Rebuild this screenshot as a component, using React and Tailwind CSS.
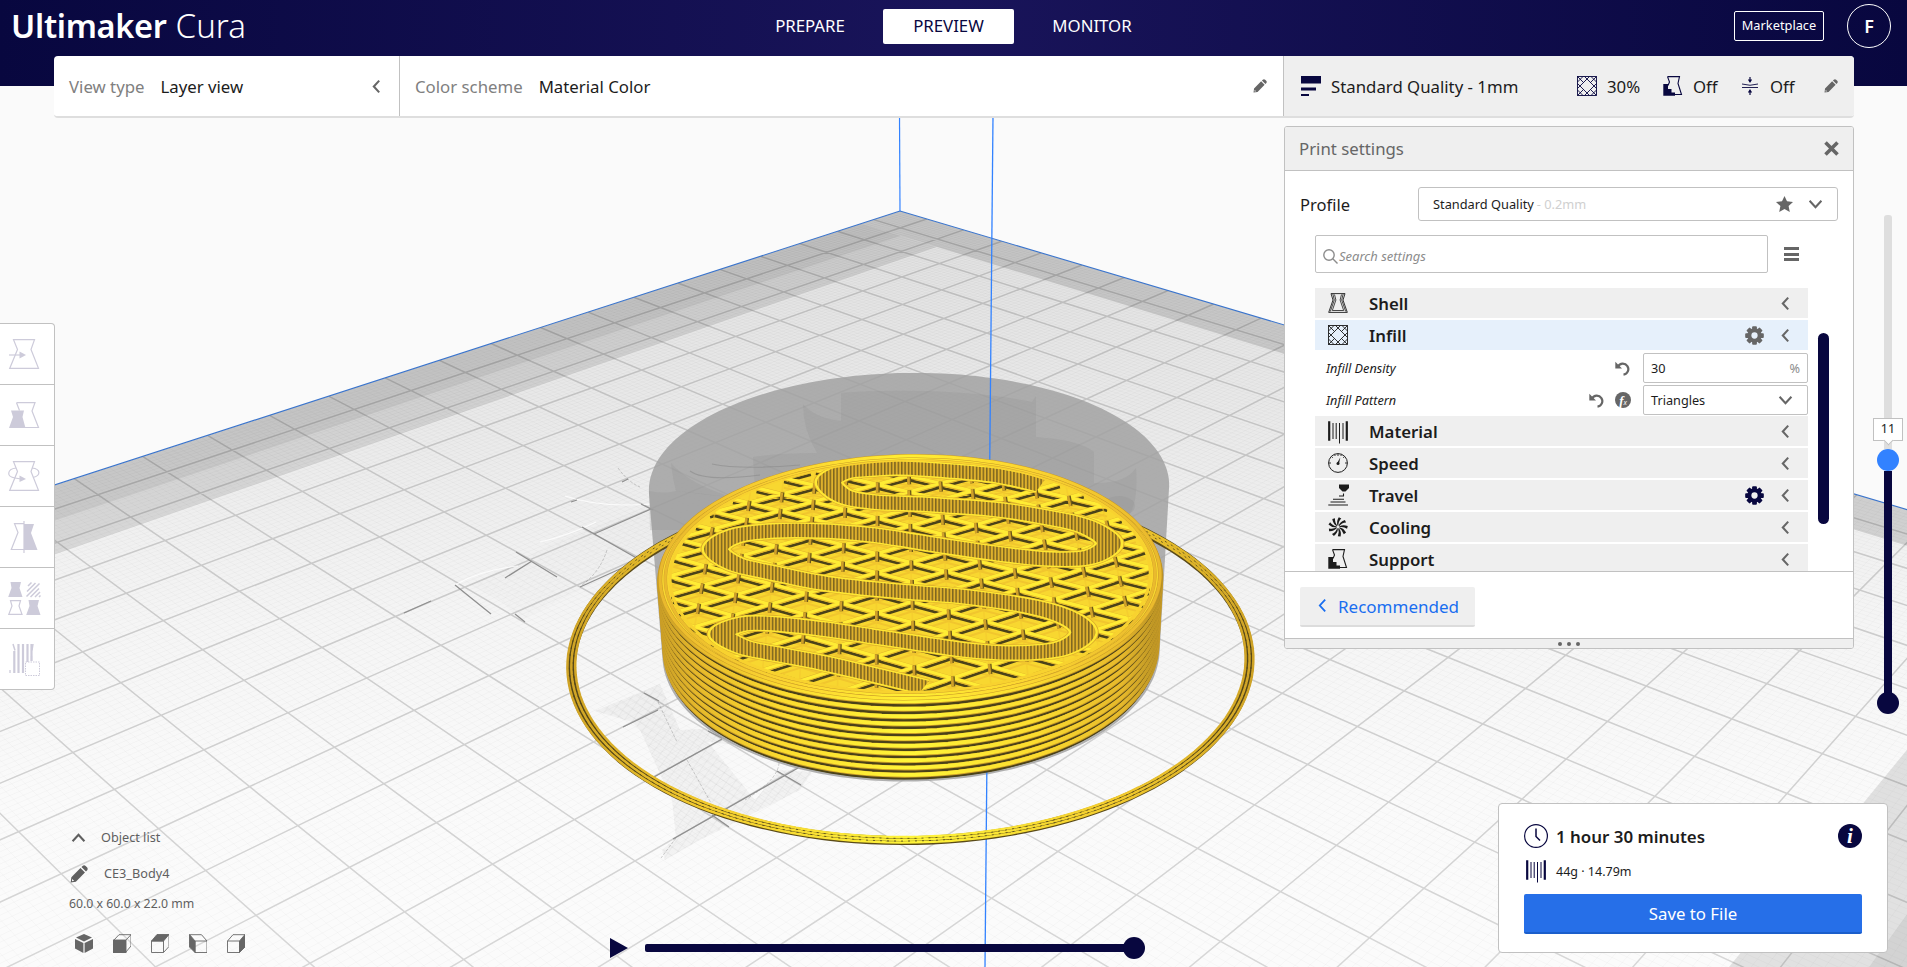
import React from "react";

/* ---------- camera ---------- */
const CX = 900, CY = 211;
const VA = [-1255, -428], VB = [2872, -428], VZ = [953.5, 4223];
const KA = -0.0164, KB = -0.01762, KZ = -0.01188;
function proj(w, u, h = 0) {
  const s = KA * w, t = KB * u, r = KZ * h;
  const d = 1 + s + t + r;
  return [(CX + s * VA[0] + t * VB[0] + r * VZ[0]) / d, (CY + s * VA[1] + t * VB[1] + r * VZ[1]) / d];
}
const f = (p) => p[0].toFixed(1) + " " + p[1].toFixed(1);
const line = (a, b) => "M" + f(a) + "L" + f(b);
const poly = (pts) => "M" + pts.map(f).join("L") + "Z";
const S = 23.5, M = 11.75;
const ring = (r, h, n = 160) =>
  Array.from({ length: n }, (_, i) => {
    const a = (i / n) * Math.PI * 2;
    return proj(M + r * Math.cos(a), M + r * Math.sin(a), h);
  });
const circle = (r, h) => poly(ring(r, h));
function hull(points) {
  const p = [...points].sort((a, b) => a[0] - b[0] || a[1] - b[1]);
  const cr = (o, a, b) => (a[0] - o[0]) * (b[1] - o[1]) - (a[1] - o[1]) * (b[0] - o[0]);
  const half = (list) => {
    const out = [];
    for (const q of list) {
      while (out.length > 1 && cr(out[out.length - 2], out[out.length - 1], q) <= 0) out.pop();
      out.push(q);
    }
    out.pop();
    return out;
  };
  return poly([...half(p), ...half(p.reverse())]);
}
const rect = (w0, w1, u0, u1) => poly([proj(w0, u0), proj(w1, u0), proj(w1, u1), proj(w0, u1)]);

let major = "", minor = "";
for (let k = 0; k < 23; k++) {
  const g = 0.75 + k;
  major += line(proj(g, 0), proj(g, S)) + line(proj(0, g), proj(S, g));
}
for (let k = 1; k < 235; k++) {
  const g = k / 10 + 0.05;
  minor += line(proj(g, 0), proj(g, S)) + line(proj(0, g), proj(S, g));
}

/* infill: three families of lines, 60 degrees apart, on the top layer */
const H = 1.02, R = 2.84, RO = 2.955;
function family(deg, spacing) {
  const a = (deg * Math.PI) / 180;
  const dx = Math.cos(a), dy = Math.sin(a);
  let out = "";
  for (let k = -9; k <= 9; k++) {
    const o = k * spacing;
    if (Math.abs(o) >= R) continue;
    const l = Math.sqrt(R * R - o * o);
    const x = M - dy * o, y = M + dx * o;
    out += line(proj(x - dx * l, y - dy * l, H), proj(x + dx * l, y + dy * l, H));
  }
  return out;
}
const FV = family(45, 0.405), FA = family(105, 0.405), FB = family(-15, 0.405);

/* a short upright wall where the three families meet */
const posts = (() => {
  let out = "";
  const d = 0.405, side = d / Math.cos(Math.PI / 6), q = Math.SQRT1_2;
  for (let c = -8; c <= 8; c++) {
    for (let k = -8; k <= 8; k++) {
      const across = c * d, along = (k + (c % 2 ? 0.5 : 0)) * side;
      if (Math.hypot(across, along) > R - 0.1) continue;
      const [x, y] = proj(M + q * (along + across), M + q * (along - across), H);
      const lean = (x - 882.5) / (y + 428);
      out += line([x - 2 * lean, y - 2], [x + 8 * lean, y + 8]);
    }
  }
  return out;
})();

/* serpentine wall, screen points */
const K = 0.55;
const snake = [
  [1041, 485], [1000, 476], [950, 471], [900, 468], [873, 469], [845, 472], [829, 482], [843, 496], [873, 502], [920, 504],
  [950, 506], [1000, 510], [1050, 518], [1087, 527], [1109, 543], [1090, 557], [1050, 559], [1000, 554], [950, 547],
  [900, 539], [873, 535], [823, 531], [773, 531], [735, 536], [716, 549], [735, 564], [773, 573], [823, 583], [873, 589],
  [920, 593], [967, 597], [1033, 607], [1070, 619], [1083, 634], [1060, 649], [1012, 653], [965, 650], [917, 643],
  [870, 636], [823, 629], [776, 624], [743, 624], [722, 634], [743, 647], [776, 654], [823, 663], [870, 674], [924, 687],
].map(([x, y]) => [x, y / K]);
const snakePath = (() => {
  let d = "M" + f(snake[0]);
  for (let i = 0; i < snake.length - 1; i++) {
    const p0 = snake[i - 1] || snake[i], p1 = snake[i], p2 = snake[i + 1], p3 = snake[i + 2] || p2;
    d += "C" + f([p1[0] + (p2[0] - p0[0]) / 6, p1[1] + (p2[1] - p0[1]) / 6]) + " " +
      f([p2[0] - (p3[0] - p1[0]) / 6, p2[1] - (p3[1] - p1[1]) / 6]) + " " + f(p2);
  }
  return d;
})();

function Scene() {
  const layers = Array.from({ length: 11 }, (_, i) => ((i + 1) * H) / 11);
  const dark = [
    [[404, 613], [431, 601]], [[455, 585], [491, 614]], [[505, 578], [532, 561]], [[516, 552], [557, 577]],
    [[580, 587], [651, 555]], [[582, 527], [640, 560]], [[594, 534], [651, 509]], [[641, 504], [653, 510]],
    [[622, 482], [628, 479]], [[571, 502], [577, 500]], [[515, 614], [525, 622]],
    [[644, 693], [659, 701]], [[623, 727], [658, 710]], [[654, 777], [722, 739]], [[673, 839], [798, 768]],
    [[777, 771], [801, 785]], [[712, 815], [729, 827]], [[708, 731], [722, 738]],
  ];
  return (
    <svg className="absolute inset-0" width="1907" height="967" viewBox="0 0 1907 967">
      <defs>
        <linearGradient id="plate" x1="0" y1="211" x2="0" y2="900" gradientUnits="userSpaceOnUse">
          <stop offset="0" stopColor="#e0e0e0" />
          <stop offset="0.3" stopColor="#e9e9e9" />
          <stop offset="0.6" stopColor="#f5f5f5" />
          <stop offset="0.85" stopColor="#fafafa" />
          <stop offset="1" stopColor="#fbfbfb" />
        </linearGradient>
        <linearGradient id="major" x1="0" y1="211" x2="0" y2="960" gradientUnits="userSpaceOnUse">
          <stop offset="0" stopColor="#bababa" />
          <stop offset="0.4" stopColor="#c8c8c8" />
          <stop offset="1" stopColor="#d7d7d7" />
        </linearGradient>
        <linearGradient id="side" x1="657" y1="0" x2="1162" y2="0" gradientUnits="userSpaceOnUse">
          <stop offset="0" stopColor="#c79d26" />
          <stop offset="0.08" stopColor="#e6b92b" />
          <stop offset="0.25" stopColor="#fbdc2f" />
          <stop offset="0.5" stopColor="#fff538" />
          <stop offset="0.75" stopColor="#fbdc2f" />
          <stop offset="0.92" stopColor="#e6b92b" />
          <stop offset="1" stopColor="#b58e23" />
        </linearGradient>
        <linearGradient id="rim" x1="657" y1="0" x2="1162" y2="0" gradientUnits="userSpaceOnUse">
          <stop offset="0" stopColor="#e9b82d" />
          <stop offset="0.3" stopColor="#fdd931" />
          <stop offset="0.5" stopColor="#ffee33" />
          <stop offset="0.7" stopColor="#fdd931" />
          <stop offset="1" stopColor="#e9b82d" />
        </linearGradient>
        <linearGradient id="skirt" x1="568" y1="0" x2="1254" y2="0" gradientUnits="userSpaceOnUse">
          <stop offset="0" stopColor="#cfa326" />
          <stop offset="0.2" stopColor="#f3cb2e" />
          <stop offset="0.5" stopColor="#fff53a" />
          <stop offset="0.8" stopColor="#f3cb2e" />
          <stop offset="1" stopColor="#cfa326" />
        </linearGradient>
        <pattern id="hatch" width="3.4" height="10" patternUnits="userSpaceOnUse">
          <rect width="3.4" height="10" fill="#dfb12c" />
          <rect width="1.5" height="10" fill="#7d6520" />
        </pattern>
        <pattern id="mesh" width="7" height="7" patternUnits="userSpaceOnUse" patternTransform="rotate(35)">
          <rect width="7" height="7" fill="#000" fillOpacity="0.03" />
          <path d="M0 0H7M0 0V7" stroke="#000" strokeOpacity="0.06" fill="none" />
        </pattern>
        <clipPath id="plateClip"><path d={rect(0, S, 0, S)} /></clipPath>
        <clipPath id="topClip"><path d={circle(R + 0.02, H)} /></clipPath>
      </defs>
      <rect width="1907" height="967" fill="#fafafa" />
      <g clipPath="url(#plateClip)">
        <path d={rect(0, S, 0, S)} fill="url(#plate)" />
        <path d={minor} stroke="#000" strokeOpacity="0.022" strokeWidth="1" fill="none" />
        <path d={major} stroke="url(#major)" strokeWidth="1.5" fill="none" />
        <path d={rect(0, 2.06, 1.1, 22.4)} fill="#000" fillOpacity="0.1" />
        <path d={rect(0, 1.1, 0, S)} fill="#000" fillOpacity="0.06" />
        <path d={rect(1.1, S, 0, 1.1)} fill="#000" fillOpacity="0.13" />
        <path d={rect(0, 1.1, 0, 1.1)} fill="#000" fillOpacity="0.07" />
        <path d={rect(21.4, S, 1.1, S)} fill="#000" fillOpacity="0.1" />
        <path d={rect(22.35, S, 0, S)} fill="#000" fillOpacity="0.06" />
      </g>
      <path d={line(proj(0, 0), proj(0, S)) + line(proj(0, 0), proj(S, 0))} stroke="#3a74cc" strokeWidth="1.1" fill="none" />
      <path d="M899.5 116L900 211" stroke="#3282ff" strokeWidth="1.2" />

      <path d="M595 711L660 684L680 730L718 728L735 745L708 742L755 800L780 770L812 772L800 790L700 840L665 860L662 850L676 838L672 800L640 730L632 722Z" fill="url(#mesh)" />
      <path d="M470 585L560 540L650 505L655 545L600 580L520 620L500 600Z" fill="url(#mesh)" opacity="0.3" />
      <path d="M565 496Q600 508 651 504M540 542Q570 535 596 522M455 585Q480 570 518 566" stroke="#fff" strokeWidth="1.2" fill="none" opacity="0.8" />
      <path d="M618 468Q628 482 640 487M607 550Q600 572 582 585M779 763Q778 780 745 800M658 702L677 742M687 760L711 803M676 838L661 858" stroke="#000" strokeOpacity="0.18" strokeWidth="1" fill="none" strokeDasharray="3 1.5" />
      <path d={dark.map(([a, b]) => line(a, b)).join("")} stroke="#8f8f8f" strokeWidth="1.3" fill="none" />

      {/* part above the current layer */}
      <path d={hull([...ring(2.99, 0), ...ring(2.99, 2.2)])} fill="#a1a1a1" fillOpacity="0.84" />
      <g fill="#8f8f8f" fillOpacity="0.22">
        <path d="M649 491Q665 494 676 491Q700 493 735 498L755 490L753 457Q780 453 817 453Q803 430 803 404Q815 418 841 421V393Q870 390 925 391Q990 393 1032 402L1036 396V437Q1080 440 1094 452V483Q1125 484 1136 468Q1138 495 1132 510L1120 530H650Z" />
        <path d="M671 463Q673 480 676 491L735 498Q690 485 671 463Z" />
        <ellipse cx="1119" cy="506" rx="16" ry="10" />
      </g>
      <path d="M690 471Q705 482 760 475M712 464Q740 470 800 465" stroke="#8a8a8a" strokeWidth="1.2" fill="none" opacity="0.6" />
      <path d="M993 116L985 967" stroke="#3282ff" strokeWidth="1.3" />

      {/* skirt */}
      <path d={circle(4.05, 0.03)} stroke="#5a4a18" strokeWidth="9" fill="none" />
      {[4.005, 4.05, 4.095].map((r) => (
        <path key={r} d={circle(r, 0.04)} stroke="url(#skirt)" strokeWidth="2.5" fill="none" />
      ))}
      <g fill="none" stroke="#4d421a" strokeWidth="0.8">
        <path d={circle(4.072, 0.04)} strokeDasharray="2 5" />
        <path d={circle(4.028, 0.04)} strokeDasharray="2 5" strokeDashoffset="3" />
      </g>

      {/* printed layers */}
      <path d={hull([...ring(RO, 0), ...ring(RO, H)])} fill="#4b4219" />
      {layers.map((h) => (
        <g key={h}>
          <path d={circle(RO, h - 0.07)} fill="none" stroke="#4b4219" strokeWidth="2.6" />
          <path d={circle(RO, h - 0.035)} fill="none" stroke="#c99c27" strokeWidth="5" />
          <path d={circle(RO, h - 0.03)} fill="none" stroke="url(#side)" strokeWidth="3.9" />
        </g>
      ))}
      <path d={circle(RO, H)} fill="#f8d730" />
      <g clipPath="url(#topClip)" fill="none">
        <path d={FA + FB} stroke="#f1c62e" strokeWidth="2" transform="translate(0 9.5)" />
        <path d={FA + FB} stroke="#4b4219" strokeWidth="2.6" transform="translate(0 3.9)" />
        <path d={FA + FB} stroke="#e0b22c" strokeWidth="4.4" />
        <path d={FA + FB} stroke="#ffec34" strokeWidth="3.2" transform="translate(0 -0.3)" />
        <path d={FV} stroke="#f3c92e" strokeWidth="1.6" opacity="0.6" />
        <path d={posts} stroke="#6b5719" strokeWidth="3.6" transform="translate(0.8 0)" />
        <path d={posts} stroke="#cfa02a" strokeWidth="2.6" />
      </g>
      <g fill="none" transform={`scale(1 ${K})`} strokeLinejoin="round">
        <path d={snakePath} stroke="#dbac2b" strokeWidth="31" />
        <path d={snakePath} stroke="#ffe833" strokeWidth="29" />
        <path d={snakePath} stroke="url(#hatch)" strokeWidth="24" />
      </g>
      <g fill="none">
        <path d={circle(2.83, H)} stroke="#f8d22f" strokeWidth="3" />
        <path d={circle(2.885, H)} stroke="#d3a329" strokeWidth="3.4" />
        <path d={circle(2.885, H)} stroke="url(#rim)" strokeWidth="2.6" />
        <path d={circle(2.945, H)} stroke="#c99a27" strokeWidth="4" />
        <path d={circle(2.945, H)} stroke="url(#rim)" strokeWidth="3" />
      </g>
    </svg>
  );
}

/* ---------- icons ---------- */
const Pencil = ({ size = 15, className = "" }) => (
  <svg width={size} height={size} viewBox="0 0 16 16" className={className} fill="currentColor">
    <path d="M11.200.9a2 2 0 0 1 2.700 0l1.200 1.200a2 2 0 0 1 0 2.700L14.200 5.800 10.200 1.800z" />
    <path fillRule="evenodd" d="M9.300 2.700l4 4L5.200 14.800.6 15.500 1.200 10.800zM2 12.500l1.600 1.600-1.400.3-.5-.5z" />
  </svg>
);
const Chevron = ({ dir = "left", w = 9, h = 15, sw = 2.3 }) => {
  const d = { left: "M8 1L2 7.500L8 14", down: "M1.500 2L8 9L14.500 2", up: "M1.500 9L8 2L14.500 9" }[dir];
  return (
    <svg width={w} height={h} viewBox={dir === "left" ? "0 0 10 15" : "0 0 16 11"} fill="none" stroke="currentColor" strokeWidth={sw}>
      <path d={d} />
    </svg>
  );
};
const InfillIcon = () => (
  <svg width="20" height="20" viewBox="0 0 20 20" fill="none" stroke="currentColor" strokeWidth="0.900">
    <rect x="0.500" y="0.500" width="19" height="19" />
    <path d="M.5 12.500L12.500 .5M7.500 19.500L19.500 7.500M7.500 .5L19.500 12.500M.5 7.500L12.500 19.500M.5 6L6 .5M14 19.500L19.500 14M14 .5L19.500 6M.5 14L6 19.500M1 1L6.500 6.500M19 1L13.500 6.500M1 19L6.500 13.500M19 19L13.500 13.500" />
  </svg>
);
const SupportIcon = () => (
  <svg width="20" height="20" viewBox="0 0 20 20" fill="none" stroke="currentColor">
    <path d="M4.500 .6H16.500L15 7.500L18.500 18.500H11M4.500 .6L6.500 6L5 9.500" strokeWidth="1.100" />
    <path d="M.3 8H5V13H8.500V16.500H12V19.800H.3Z" fill="currentColor" stroke="none" />
  </svg>
);
const AdhesionIcon = () => (
  <svg width="18" height="20" viewBox="0 0 18 20" fill="none" stroke="currentColor">
    <path d="M1 8Q9 10.500 17 8M1 11.500H17" strokeWidth="0.900" />
    <path d="M9 1V5M9 19V15" strokeWidth="1.200" />
    <path d="M6.800 3.500H11.200L9 7ZM6.800 16.500H11.200L9 13Z" fill="currentColor" stroke="none" />
  </svg>
);
const ShellIcon = () => (
  <svg width="20" height="20" viewBox="0 0 20 20" fill="none" stroke="currentColor" strokeWidth="0.900">
    <path d="M3 .6H17L15 7L19.300 19.400H.7L5 7Z" />
    <path d="M4.800 .8L6.300 7L2.300 18.500M15.200 .8L13.700 7L17.700 18.500M6.500 1.500L7.900 7L4.300 17.500H15.700L12.100 7L13.500 1.500" strokeWidth="0.800" />
  </svg>
);
const MaterialIcon = ({ w = 20, h = 23 }) => (
  <svg width={w} height={h} viewBox="0 0 20 23" fill="none" stroke="currentColor">
    <path d="M1.200 .3V19.700M18.800 .3V19.700" strokeWidth="2.200" />
    <path d="M5 2V18M8.200 2V18M11.500 2V22.500M15 2V18" strokeWidth="1" />
  </svg>
);
const SpeedIcon = () => (
  <svg width="20" height="20" viewBox="0 0 20 20" fill="none" stroke="currentColor" strokeWidth="1">
    <circle cx="10" cy="10" r="9.400" />
    <path d="M10 1V3M3.500 3.500L4.800 4.800M1 10H3M17 10H19M15.200 4.800L16.500 3.500M6.500 1.500L7.200 3M13.500 1.500L12.800 3" strokeWidth="0.900" />
    <circle cx="10" cy="10.500" r="1.500" fill="currentColor" stroke="none" />
    <path d="M9.200 10L12.300 4.500L11 10.800Z" fill="currentColor" stroke="none" />
  </svg>
);
const TravelIcon = () => (
  <svg width="21" height="22" viewBox="0 0 21 22" fill="none" stroke="currentColor">
    <path d="M11 .5H21V4L17.500 7.500H14.500L11 4Z" fill="currentColor" stroke="none" />
    <path d="M15.500 9.500V12M11 12H16M5 15.200H16M2.500 18H17.500M.3 21H20" strokeWidth="1.100" />
  </svg>
);
const CoolingIcon = () => (
  <svg width="20" height="20" viewBox="-10 -10 20 20" fill="currentColor">
    {[0, 40, 80, 120, 160, 200, 240, 280, 320].map((a) => (
      <path key={a} transform={`rotate(${a})`} d="M-.4 -1.500Q-2 -5.500 .8 -9.800L3.300 -8.600Q.2 -5.500 .4 -1.400Z" />
    ))}
  </svg>
);
const Gear = () => (
  <svg width="19" height="19" viewBox="-10 -10 20 20" fill="currentColor">
    {[0, 45, 90, 135].map((a) => <rect key={a} x="-2.500" y="-9.800" width="5" height="19.600" rx="1" transform={`rotate(${a})`} />)}
    <circle r="7.600" />
    <circle r="3.300" className="fill-[var(--hole)]" />
  </svg>
);
const Undo = () => (
  <svg width="16" height="15" viewBox="0 0 16 15" fill="none" stroke="currentColor">
    <path d="M3 5.500A5.500 5.500 0 1 1 8.500 13.600" strokeWidth="2.200" />
    <path d="M.3 .8V7.500H7Z" fill="currentColor" stroke="none" />
  </svg>
);
const C = "#cdcbda";
const toolIcons = [
  <g key="a" fill="none" stroke={C} strokeWidth="1.200"><path d="M4.500 .7H25.500L22 10.500L29.500 29.400H.7L8.500 10.500Z" /><path d="M0 16H12" /><path d="M10.500 12.500V19.500L17 16Z" fill={C} stroke="none" /></g>,
  <g key="b" fill="none" stroke={C} strokeWidth="1.200"><path d="M7.500 2.700H26L23 11L29.500 27.500H15M7.500 2.700L10.500 10.500" /><path d="M2 10.500H15L13.500 17L16.500 28H0L4 17Z" fill={C} stroke="none" /></g>,
  <g key="c" fill="none" stroke={C} strokeWidth="1.200"><path d="M4.500 .7H25.500L22 10.500L29.500 29.400H.7L8.500 10.500Z" /><path d="M7 7C-2 8-3 16 6 17L12 18M23 7C32 8 32 14.500 24 16.500" /><path d="M10.500 14.500V21L17 18Z" fill={C} stroke="none" /></g>,
  <g key="d" fill="none" stroke={C} strokeWidth="1.200"><path d="M15 1.700H5.500L9 10.500L2.300 27.500H15M15 -1V31" /><path d="M15 2H25L22 11L28.500 28H15Z" fill={C} stroke="none" /></g>,
  <g key="e" fill={C} stroke="none"><path d="M1.500 -1H12L10.500 5L13.500 14H-.8L2.500 5Z M19.500 17H30L28.500 23L31.500 32H17.200L20.500 23Z" /><path d="M1.500 17.600H11.500L10 23L13 31.400H-.2L3 23Z" fill="none" stroke={C} strokeWidth="1.200" /><path d="M19 3L22.500 -.5M18 8.500L26.500 0M17.500 13.500L30.500 .5M21.500 14L30 5.500M26 14L31 9M30 14L31.500 12.500" fill="none" stroke={C} strokeWidth="1.500" /></g>,
  <g key="f" fill="none" stroke={C}><path d="M4 0L6 6.500M23 6.500L24 0" strokeWidth="1.500" /><path d="M5.300 7V29M9.500 0V29M14 0V29M18.500 0V18M22.500 0V17" strokeWidth="2.200" /><path d="M1 26V29M22.500 12V17" strokeWidth="1.300" /><rect x="16.500" y="18" width="14" height="13.500" strokeDasharray="1.500 1" fill="#fff" /></g>,
];

/* ---------- panel ---------- */
function Category({ icon, label, gear, active }) {
  return (
    <div className={"flex h-[30px] shrink-0 items-center pl-[13px] pr-[18px] text-[#1c1c1c] " + (active ? "bg-[#e6f0fb] [--hole:#e6f0fb]" : "bg-[#efefef] [--hole:#efefef]")}>
      <div className="flex w-[41px] items-center">{icon}</div>
      <div className="flex-1 pt-[2px] text-[16.800px] font-semibold">{label}</div>
      {gear && <div className={"mr-[17px] " + gear}><Gear /></div>}
      <div className="text-[#666]"><Chevron h={17} /></div>
    </div>
  );
}

function PrintSettings() {
  return (
    <div className="flex h-[523px] w-[570px] flex-col overflow-hidden rounded-[3px] border border-[#c1c1c1] bg-white">
      <div className="flex h-[44px] shrink-0 items-center justify-between border-b border-[#c1c1c1] bg-[#efefef] pl-[14px] pr-[14px] text-[16.800px] text-[#666]">
        <span>Print settings</span>
        <svg width="15" height="15" viewBox="0 0 15 15" stroke="currentColor" strokeWidth="3.600"><path d="M1.500 1.500L13.500 13.500M13.500 1.500L1.500 13.500" /></svg>
      </div>
      <div className="mt-[16px] flex items-center pl-[15px] pr-[15px]">
        <div className="flex-1 pt-[2px] text-[16.500px] text-[#1c1c1c]">Profile</div>
        <div className="flex h-[34px] w-[420px] items-center rounded-[3px] border border-[#c1c1c1] pl-[14px] pr-[14px] text-[12.800px] text-[#1c1c1c]">
          <span className="pt-px">Standard Quality</span>
          <span className="ml-[3px] flex-1 pt-px text-[#d0d0d0]">- 0.2mm</span>
          <svg width="17" height="16" viewBox="0 0 17 16" fill="#666"><path d="M8.500 0L11 5.300L17 6L12.600 10L13.800 16L8.500 13L3.200 16L4.400 10L0 6L6 5.300Z" /></svg>
          <div className="ml-[15px] text-[#666]"><Chevron dir="down" w={15} h={10} /></div>
        </div>
      </div>
      <div className="mt-[14px] flex items-center pl-[30px]">
        <div className="flex h-[38px] w-[453px] items-center rounded-[2px] border border-[#c1c1c1] pl-[7px] pt-[5px] text-[13px] italic text-[#8c8c8c]">
          <svg width="15" height="15" viewBox="0 0 15 15" fill="none" stroke="#8c8c8c" strokeWidth="1.400"><circle cx="6" cy="6" r="5.200" /><path d="M9.800 9.800L14.500 14.500" /></svg>
          <span className="ml-px pt-px">Search settings</span>
        </div>
        <div className="ml-[16px] flex w-[15px] flex-col gap-[2.500px]">
          <div className="h-[3px] bg-[#666]" /><div className="h-[3px] bg-[#666]" /><div className="h-[3px] bg-[#666]" />
        </div>
      </div>
      <div className="mt-[15px] flex h-[283px] shrink-0 overflow-hidden pl-[30px]">
        <div className="flex w-[493px] flex-col gap-[2px]">
          <Category icon={<ShellIcon />} label="Shell" />
          <Category icon={<InfillIcon />} label="Infill" gear="text-[#666]" active />
          <div className="-mt-[2px] flex h-[64px] shrink-0 flex-col gap-[2px] pt-[3px] text-[12.700px] text-[#1c1c1c]">
            <div className="flex h-[30px] shrink-0 items-center [&_span]:pt-px">
              <span className="flex-1 pl-[11px] italic">Infill Density</span>
              <div className="mr-[12px] text-[#666]"><Undo /></div>
              <div className="flex h-[30px] w-[165px] items-center justify-between rounded-[2px] border border-[#c1c1c1] pl-[7px] pr-[7px]">
                <span>30</span><span className="text-[#8c8c8c]">%</span>
              </div>
            </div>
            <div className="flex h-[30px] shrink-0 items-center">
              <span className="flex-1 pl-[11px] pt-px italic">Infill Pattern</span>
              <div className="mr-[10px] text-[#666]"><Undo /></div>
              <div className="mr-[12px] flex h-[16px] w-[16px] items-center justify-center rounded-full bg-[#666] text-[10px] italic leading-none text-white">
                <span className="font-['Liberation_Serif',serif] text-[13px] font-bold">f</span><span className="mt-[5px] text-[7px]">x</span>
              </div>
              <div className="flex h-[30px] w-[165px] items-center justify-between rounded-[2px] border border-[#c1c1c1] pl-[7px] pr-[14px]">
                <span className="pt-px">Triangles</span><span className="text-[#666]"><Chevron dir="down" w={15} h={10} /></span>
              </div>
            </div>
          </div>
          <Category icon={<div className="pt-[3px]"><MaterialIcon /></div>} label="Material" />
          <Category icon={<SpeedIcon />} label="Speed" />
          <Category icon={<TravelIcon />} label="Travel" gear="text-[#08073f]" />
          <Category icon={<CoolingIcon />} label="Cooling" />
          <Category icon={<SupportIcon />} label="Support" />
        </div>
        <div className="ml-[10px] mt-[45px] h-[191px] w-[11px] rounded-full bg-[#08073f]" />
      </div>
      <div className="flex flex-1 items-center border-t border-[#c1c1c1] pl-[15px] pt-[3px]">
        <button className="flex h-[40px] w-[175px] items-center rounded-[2px] border-b-2 border-[#dcdcdc] bg-[#efefef] pl-[18px] text-[17px] text-[#196ef0]">
          <Chevron h={15} sw={2} /><span className="ml-[11px] pt-[2px]">Recommended</span>
        </button>
      </div>
      <div className="flex h-[10px] shrink-0 items-center justify-center gap-[5px] border-t border-[#c1c1c1] bg-[#efefef]">
        <i className="h-[4px] w-[4px] rounded-full bg-[#666]" /><i className="h-[4px] w-[4px] rounded-full bg-[#666]" /><i className="h-[4px] w-[4px] rounded-full bg-[#666]" />
      </div>
    </div>
  );
}

const G = "#666";
const cubes = [
  <g key="0" fill={G}><path d="M9 0L17 3.500L9 7.500L1 3.500Z M0 5L8.400 9V19L0 14.500Z M18 5L9.600 9V19L18 14.500Z" /></g>,
  <g key="1" fill="none" stroke={G} strokeWidth="0.900"><path d="M.5 6.500L6 .7H18V12L12.500 18.500M12.500 6.500L18 .7" /><path d="M0 6H13V19H0Z" fill={G} /></g>,
  <g key="2" fill="none" stroke={G} strokeWidth="0.900"><path d="M.5 7H12.500V18.500H.5ZM18 1V12.500L12.500 18.500" /><path d="M6 .5H18L12.500 7H.5Z" fill={G} /></g>,
  <g key="3" fill="none" stroke={G} strokeWidth="0.900"><path d="M6 7H18V18.500H6ZM.5 .7H12.500L18 7" /><path d="M.5 .5L6 7V18.500L.5 13Z" fill={G} /></g>,
  <g key="4" fill="none" stroke={G} strokeWidth="0.900"><path d="M.5 7H12.500V18.500H.5ZM.5 7L6 .7H18" /><path d="M18 .5L12.500 7V18.500L18 13Z" fill={G} /></g>,
];

export default function App() {
  return (
    <div className="relative flex h-[967px] w-[1907px] flex-col overflow-hidden bg-[#fafafa] font-['Noto_Sans',sans-serif] leading-normal">
      <Scene />

      <header className="relative flex h-[86px] shrink-0 items-start bg-[linear-gradient(90deg,#08073f_0%,#19145a_50%,#08073f_100%)] text-white">
        <div className="flex h-[52px] w-[758px] items-center pl-[11px] text-[32.500px]">
          <span className="font-semibold tracking-[-0.3px]">Ultimaker</span>
          <span className="ml-[9px] text-[33px] font-light">Cura</span>
        </div>
        <nav className="flex h-[52px] items-center text-[16.800px]">
          <div className="w-[104px] text-center">PREPARE</div>
          <div className="ml-[21px] flex h-[35px] w-[131px] items-center justify-center rounded-[2px] bg-white text-[#08073f]">PREVIEW</div>
          <div className="ml-[21px] w-[114px] text-center">MONITOR</div>
        </nav>
        <div className="ml-auto flex h-[52px] items-center pr-[16px]">
          <div className="flex h-[30px] w-[90px] items-center justify-center rounded-[2px] border border-white text-[12.800px]">Marketplace</div>
          <div className="ml-[23px] flex h-[44px] w-[44px] items-center justify-center rounded-full border border-white text-[18px] font-semibold">F</div>
        </div>
      </header>

      <div className="relative ml-[54px] mr-[53px] -mt-[30px] flex h-[62px] shrink-0 overflow-hidden rounded-[4px] border-b-2 border-[#dedede] bg-white text-[16.800px] text-[#1c1c1c] [&_span]:pt-px">
        <div className="flex w-[346px] items-center border-r border-[#c1c1c1] pl-[15px] pr-[18px]">
          <span className="text-[#808080]">View type</span>
          <span className="ml-[16px] flex-1">Layer view</span>
          <i className="text-[#666]"><Chevron h={15} /></i>
        </div>
        <div className="flex flex-1 items-center pl-[15px] pr-[16px]">
          <span className="text-[#808080]">Color scheme</span>
          <span className="ml-[16px] flex-1">Material Color</span>
          <Pencil size={14} className="text-[#666]" />
        </div>
        <div className="flex w-[571px] items-center border-l border-[#c1c1c1] bg-[#efefef] pl-[17px] pr-[16px] [&_svg]:shrink-0">
          <svg width="20" height="20" viewBox="0 0 20 20" fill="#08073f"><path d="M0 0H20V7.500H0ZM0 11.500H15V14.500H0ZM0 18H8V20H0Z" /></svg>
          <span className="ml-[10px] w-[246px]">Standard Quality - 1mm</span>
          <i className="flex items-center text-[#08073f]"><InfillIcon /></i><span className="ml-[10px] w-[56px]">30%</span>
          <i className="flex items-center text-[#08073f]"><SupportIcon /></i><span className="ml-[10px] w-[48px]">Off</span>
          <i className="flex items-center text-[#08073f]"><AdhesionIcon /></i><span className="ml-[11px] flex-1">Off</span>
          <Pencil size={14} className="text-[#666]" />
        </div>
      </div>

      <main className="relative flex min-h-0 flex-1">
        <div className="flex w-[600px] shrink-0 flex-col">
          <div className="mt-[205px] flex h-[367px] w-[55px] shrink-0 flex-col divide-y divide-[#c1c1c1] rounded-r-[4px] border border-l-0 border-[#c1c1c1] bg-white">
            {toolIcons.map((ic, i) => (
              <div key={i} className="flex flex-1 items-center pl-[9px]">
                <svg width="30" height="30" viewBox="0 0 30 30" className="overflow-visible">{ic}</svg>
              </div>
            ))}
          </div>
          <div className="mt-[138px] flex flex-col pl-[69px] text-[12.700px] text-[#5f5f5f]">
            <div className="flex h-[20px] items-center"><span className="ml-[2px] mr-[15px]"><Chevron dir="up" w={15} h={10} /></span>Object list</div>
            <div className="mt-[16px] flex h-[20px] items-center"><span className="ml-px mr-[16px]"><Pencil size={18} /></span>CE3_Body4</div>
            <div className="mt-[10px] flex h-[20px] items-center text-[12.300px]">60.0 x 60.0 x 22.0 mm</div>
            <div className="mt-[20px] flex gap-[20px] pl-[6px]">
              {cubes.map((c, i) => <svg key={i} width="18" height="19" viewBox="0 0 18 19">{c}</svg>)}
            </div>
          </div>
        </div>

        <div className="flex w-[684px] shrink-0 items-center self-end pb-[8px] pl-[10px]">
          <svg width="18" height="20" viewBox="0 0 18 20" fill="#08073f"><path d="M0 0L18 10L0 20Z" /></svg>
          <div className="ml-[17px] flex h-[22px] w-[500px] items-center">
            <div className="h-[8px] w-[480px] rounded-l-[2px] bg-[#08073f]" />
            <div className="-ml-[2px] h-[22px] w-[22px] rounded-full bg-[#08073f]" />
          </div>
        </div>

        <div className="flex w-[623px] shrink-0 flex-col justify-between pt-[8px] pb-[14px]">
          <div className="flex items-start">
            <PrintSettings />
            <div className="mt-[89px] ml-[18px] flex w-[32px] flex-col items-center">
              <div className="h-[203px] w-[8px] rounded-t-[3px] bg-[#dedede]" />
              <div className="relative flex h-[23px] w-[30px] items-center justify-center border border-[#c1c1c1] bg-white text-[12.500px] text-[#1c1c1c]">
                11
                <i className="absolute -bottom-[4px] h-[7px] w-[7px] rotate-45 border-r border-b border-[#c1c1c1] bg-white" />
              </div>
              <div className="h-[8px] w-[8px] bg-[#dedede]" />
              <div className="h-[22px] w-[22px] rounded-full bg-[#3282ff]" />
              <div className="h-[222px] w-[8px] bg-[#08073f]" />
              <div className="-mt-[1px] h-[22px] w-[22px] rounded-full bg-[#08073f]" />
            </div>
          </div>
          <div className="mr-[19px] flex h-[150px] w-[390px] flex-col self-end rounded-[4px] border border-[#c1c1c1] bg-white px-[25px] pt-[20px]">
            <div className="flex h-[24px] items-center">
              <svg width="24" height="24" viewBox="0 0 24 24" fill="none" stroke="#08073f"><circle cx="12" cy="12" r="11.400" strokeWidth="1.200" /><path d="M12 4.500V12.500L16 16.500" strokeWidth="1.500" /></svg>
              <span className="ml-[8px] flex-1 pt-px text-[16.900px] font-semibold text-[#1c1c1c]">1 hour 30 minutes</span>
              <span className="flex h-[24px] w-[24px] items-center justify-center rounded-full bg-[#08073f] font-['Liberation_Serif',serif] text-[21px] font-bold italic leading-none text-white">i</span>
            </div>
            <div className="mt-[11px] flex h-[24px] items-center text-[12.500px] text-[#1c1c1c]">
              <span className="ml-[2px] mr-[10px] pt-px text-[#08073f]"><MaterialIcon /></span><span className="pt-[2px]">44g · 14.79m</span>
            </div>
            <button className="mt-[11px] h-[40px] rounded-[2px] border-b-2 border-[#1b5ecb] bg-[#266fe8] pt-px text-[16.800px] text-white">Save to File</button>
          </div>
        </div>
      </main>
    </div>
  );
}
